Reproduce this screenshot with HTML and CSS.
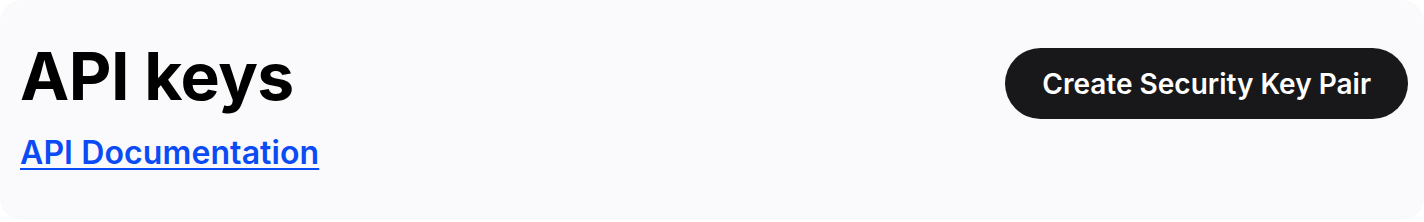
FILE: index.html
```html
<!DOCTYPE html>
<html>
<head>
<meta charset="utf-8">
<link rel="stylesheet" href="styles.css">
</head>
<body>
<div class="card">
  <div class="left">
    <h1 class="title">API keys</h1>
    <a class="doc-link" href="#">API Documentation</a>
  </div>
  <button class="btn">Create Security Key Pair</button>
</div>
</body>
</html>
```
FILE: styles.css
```css
html, body {
  margin: 0;
  padding: 0;
  background: #ffffff;
}
body {
  font-family: Inter, "Noto Sans", sans-serif;
}
.card {
  box-sizing: border-box;
  width: 1424px;
  height: 220px;
  background: #fafafc;
  border-radius: 22px;
  padding: 36px 16px 0 20px;
  display: flex;
  justify-content: space-between;
  align-items: flex-start;
}
.left {
  display: flex;
  flex-direction: column;
}
.title {
  margin: 0;
  font-size: 66px;
  font-weight: 700;
  line-height: 80px;
  color: #000;
  letter-spacing: -0.5px;
}
.doc-link {
  margin-top: 17px;
  font-size: 32px;
  font-weight: 600;
  line-height: 40px;
  color: #0a4bf5;
  letter-spacing: 0.1px;
  text-decoration: underline;
  text-underline-offset: 4px;
  text-decoration-thickness: 2px;
}
.btn {
  margin-top: 12px;
  height: 71px;
  padding: 0 37px;
  border: none;
  border-radius: 36px;
  background: #18181b;
  color: #fff;
  font-family: Inter, "Noto Sans", sans-serif;
  font-size: 28px;
  font-weight: 600;
}
```
